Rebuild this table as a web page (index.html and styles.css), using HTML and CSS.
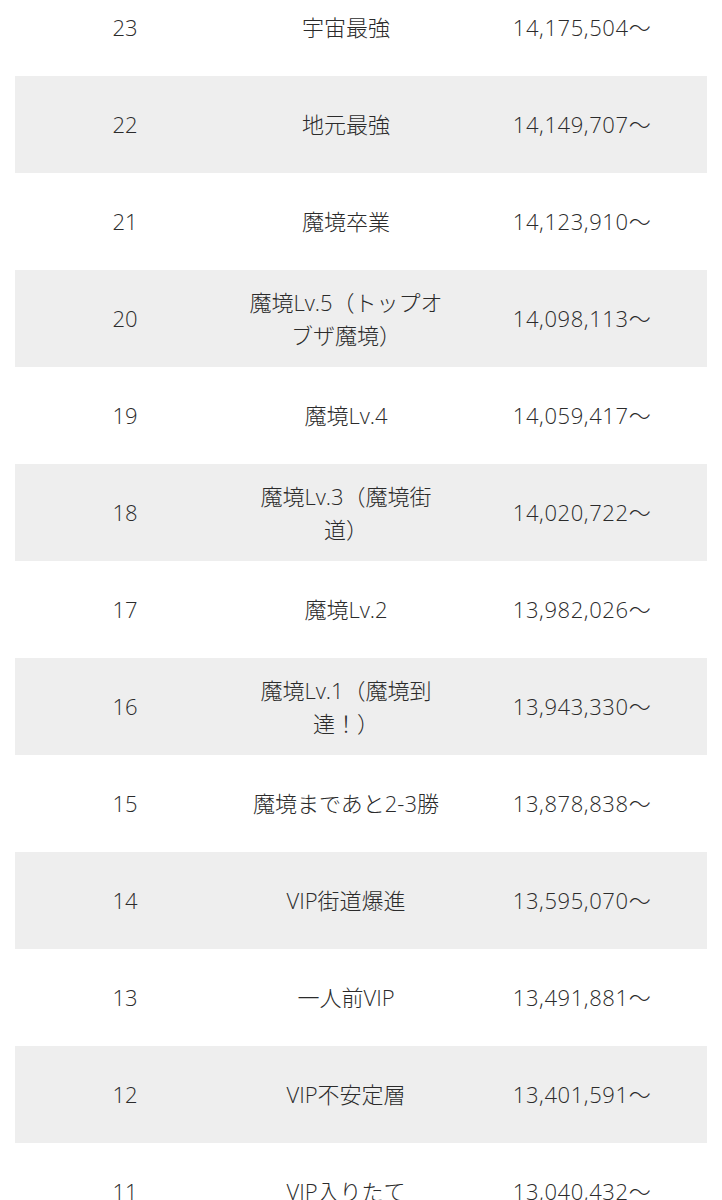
FILE: index.html
```html
<!DOCTYPE html>
<html lang="ja">
<head>
<meta charset="utf-8">
<link rel="stylesheet" href="styles.css">
</head>
<body>
<table class="rank-table">
  <colgroup>
    <col class="col-rank">
    <col class="col-name">
    <col class="col-score">
  </colgroup>
  <tbody>
    <tr><td>23</td><td>宇宙最強</td><td class="score">14,175,504〜</td></tr>
    <tr class="alt"><td>22</td><td>地元最強</td><td class="score">14,149,707〜</td></tr>
    <tr><td>21</td><td>魔境卒業</td><td class="score">14,123,910〜</td></tr>
    <tr class="alt"><td>20</td><td>魔境Lv.5（トップオ<br>ブザ魔境）</td><td class="score">14,098,113〜</td></tr>
    <tr><td>19</td><td>魔境Lv.4</td><td class="score">14,059,417〜</td></tr>
    <tr class="alt"><td>18</td><td>魔境Lv.3（魔境街<br>道）</td><td class="score">14,020,722〜</td></tr>
    <tr><td>17</td><td>魔境Lv.2</td><td class="score">13,982,026〜</td></tr>
    <tr class="alt"><td>16</td><td>魔境Lv.1（魔境到<br>達！）</td><td class="score">13,943,330〜</td></tr>
    <tr><td>15</td><td>魔境まであと2-3勝</td><td class="score">13,878,838〜</td></tr>
    <tr class="alt"><td>14</td><td>VIP街道爆進</td><td class="score">13,595,070〜</td></tr>
    <tr><td>13</td><td>一人前VIP</td><td class="score">13,491,881〜</td></tr>
    <tr class="alt"><td>12</td><td>VIP不安定層</td><td class="score">13,401,591〜</td></tr>
    <tr><td>11</td><td>VIP入りたて</td><td class="score">13,040,432〜</td></tr>
  </tbody>
</table>
</body>
</html>
```
FILE: styles.css
```css
html, body {
  margin: 0;
  padding: 0;
  background: #ffffff;
}
body {
  font-family: "Open Sans", "Noto Sans CJK JP", sans-serif;
  color: #2b2b2b;
  overflow: hidden;
}
.rank-table {
  width: 692px;
  margin: -21px 0 0 15px;
  border-collapse: collapse;
  table-layout: fixed;
}
.col-rank { width: 220px; }
.col-name { width: 222px; }
.col-score { width: 250px; }
.rank-table td {
  height: 97px;
  padding: 0;
  text-align: center;
  vertical-align: middle;
  font-size: 22px;
  line-height: 33px;
  font-weight: 300;
}
.rank-table td.score {
  letter-spacing: 0.6px;
}
.rank-table tr.alt td {
  background: #eeeeee;
}
```
